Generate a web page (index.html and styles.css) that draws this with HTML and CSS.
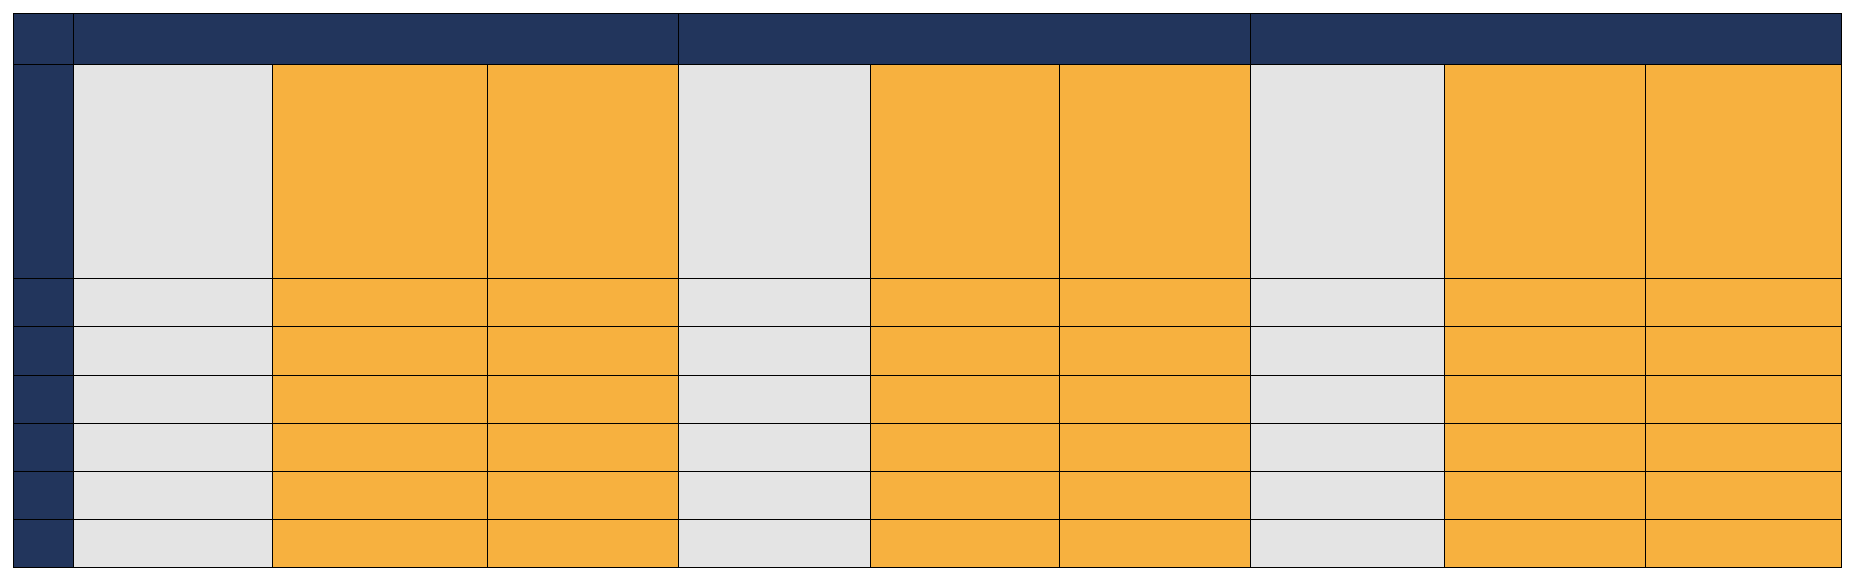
FILE: index.html
```html
<!DOCTYPE html>
<html>
<head>
<meta charset="utf-8">
<link rel="stylesheet" href="styles.css">
</head>
<body>
<div class="grid">
  <div class="c navy"></div>
  <div class="c navy span3"></div>
  <div class="c navy span3"></div>
  <div class="c navy span3"></div>

  <div class="c navy"></div>
  <div class="c gray"></div><div class="c orange"></div><div class="c orange"></div>
  <div class="c gray"></div><div class="c orange"></div><div class="c orange"></div>
  <div class="c gray"></div><div class="c orange"></div><div class="c orange"></div>

  <div class="c navy"></div>
  <div class="c gray"></div><div class="c orange"></div><div class="c orange"></div>
  <div class="c gray"></div><div class="c orange"></div><div class="c orange"></div>
  <div class="c gray"></div><div class="c orange"></div><div class="c orange"></div>

  <div class="c navy"></div>
  <div class="c gray"></div><div class="c orange"></div><div class="c orange"></div>
  <div class="c gray"></div><div class="c orange"></div><div class="c orange"></div>
  <div class="c gray"></div><div class="c orange"></div><div class="c orange"></div>

  <div class="c navy"></div>
  <div class="c gray"></div><div class="c orange"></div><div class="c orange"></div>
  <div class="c gray"></div><div class="c orange"></div><div class="c orange"></div>
  <div class="c gray"></div><div class="c orange"></div><div class="c orange"></div>

  <div class="c navy"></div>
  <div class="c gray"></div><div class="c orange"></div><div class="c orange"></div>
  <div class="c gray"></div><div class="c orange"></div><div class="c orange"></div>
  <div class="c gray"></div><div class="c orange"></div><div class="c orange"></div>

  <div class="c navy"></div>
  <div class="c gray"></div><div class="c orange"></div><div class="c orange"></div>
  <div class="c gray"></div><div class="c orange"></div><div class="c orange"></div>
  <div class="c gray"></div><div class="c orange"></div><div class="c orange"></div>

  <div class="c navy"></div>
  <div class="c gray"></div><div class="c orange"></div><div class="c orange"></div>
  <div class="c gray"></div><div class="c orange"></div><div class="c orange"></div>
  <div class="c gray"></div><div class="c orange"></div><div class="c orange"></div>
</div>
</body>
</html>
```

FILE: styles.css
```css
html, body {
  margin: 0;
  padding: 0;
  background: #ffffff;
  font-family: "Liberation Sans", Arial, sans-serif;
}
body {
  padding: 13px 0 0 13px;
}
.grid {
  display: inline-grid;
  background: #000000;
  padding: 1px;
  gap: 1px;
  grid-template-columns: 59px 198px 214px 190px 191px 188px 190px 193px 200px 195px;
  grid-template-rows: 50px 213px 47px 48px 47px 47px 47px 47px;
}
.span3 {
  grid-column: span 3;
}
.navy {
  background: #22355c;
}
.gray {
  background: #e4e4e4;
}
.orange {
  background: #f7b13f;
}
```
